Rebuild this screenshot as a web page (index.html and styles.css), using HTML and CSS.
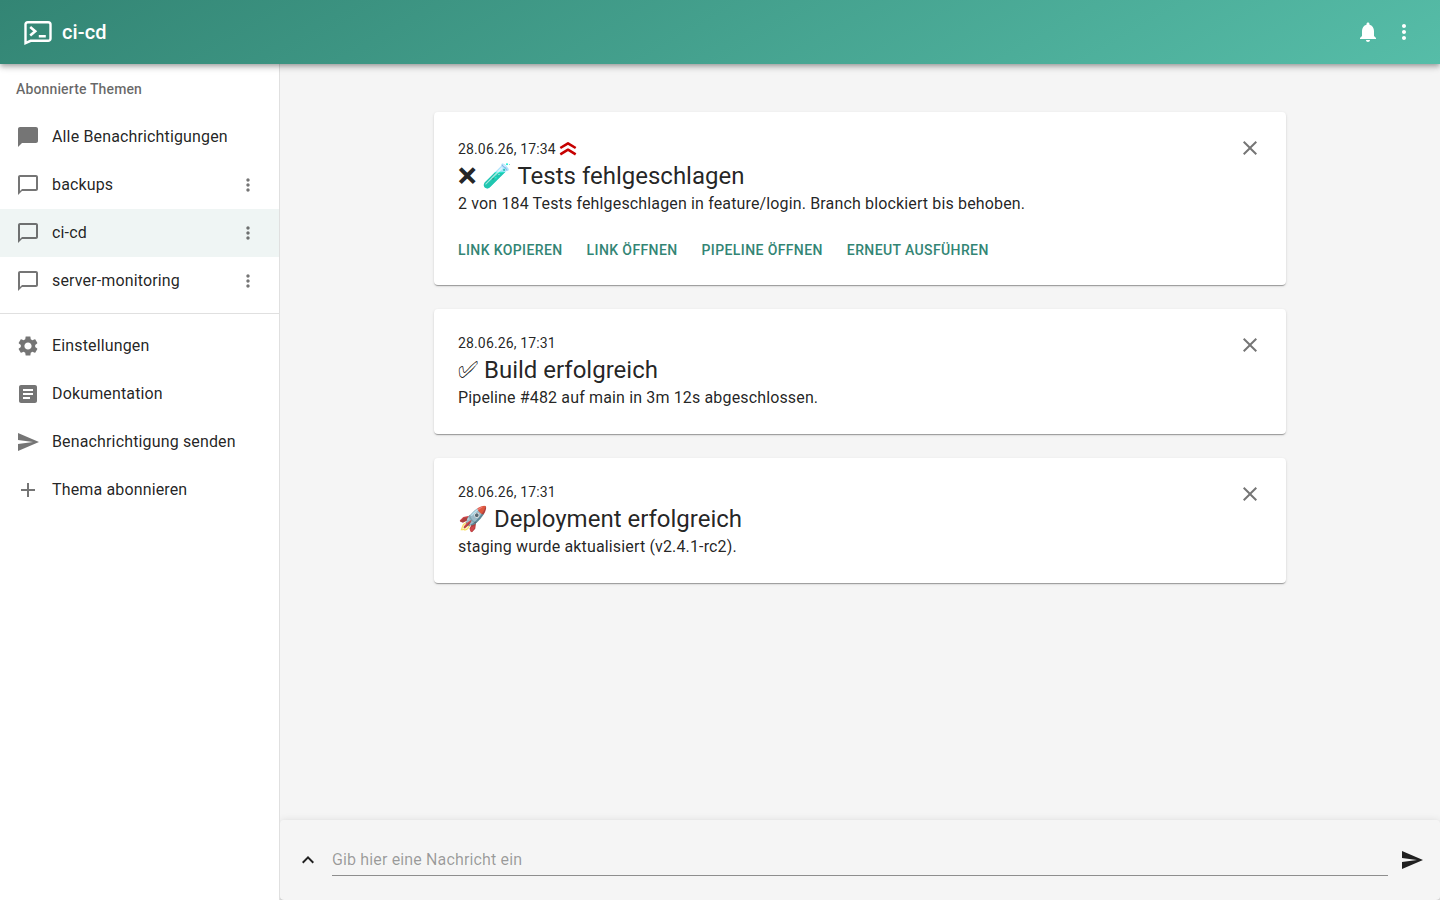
FILE: index.html
```html
<!DOCTYPE html>
<html lang="de">
<head>
    <meta charset="UTF-8">
    <meta name="viewport" content="width=device-width, initial-scale=1.0">
    <title>ci-cd</title>
    <link rel="stylesheet" href="styles.css">
</head>
<body>
    <header class="app-bar">
        <svg class="logo" viewBox="0 0 28 28" fill="none" stroke="#fff">
            <path d="M1.5 25.2V6.6a2.4 2.4 0 0 1 2.4-2.4h20.2a2.4 2.4 0 0 1 2.4 2.4v13.8a2.4 2.4 0 0 1-2.4 2.4H6.6z" stroke-width="2.4"/>
            <path d="M6.2 9l5 4.2-5 4.2M14.8 18.2h7" stroke-width="2.6"/>
        </svg>
        <h1>ci-cd</h1>
        <svg class="icon bell" viewBox="0 0 24 24"><path d="M12 22c1.1 0 2-.9 2-2h-4c0 1.1.89 2 2 2m6-6v-5c0-3.07-1.64-5.64-4.5-6.32V4c0-.83-.67-1.5-1.5-1.5s-1.5.67-1.5 1.5v.68C7.63 5.36 6 7.92 6 11v5l-2 2v1h16v-1z"/></svg>
        <svg class="icon" viewBox="0 0 24 24"><path d="M12 8c1.1 0 2-.9 2-2s-.9-2-2-2-2 .9-2 2 .9 2 2 2m0 2c-1.1 0-2 .9-2 2s.9 2 2 2 2-.9 2-2-.9-2-2-2m0 6c-1.1 0-2 .9-2 2s.9 2 2 2 2-.9 2-2-.9-2-2-2"/></svg>
    </header>

    <div class="layout">
        <nav class="sidebar">
            <div class="subheader">Abonnierte Themen</div>
            <a class="nav-item">
                <svg class="icon" viewBox="0 0 24 24"><path d="M20 2H4c-1.1 0-1.99.9-1.99 2L2 22l4-4h14c1.1 0 2-.9 2-2V4c0-1.1-.9-2-2-2"/></svg>
                <span>Alle Benachrichtigungen</span>
            </a>
            <a class="nav-item">
                <svg class="icon" viewBox="0 0 24 24"><path d="M20 2H4c-1.1 0-2 .9-2 2v18l4-4h14c1.1 0 2-.9 2-2V4c0-1.1-.9-2-2-2m0 14H6l-2 2V4h16z"/></svg>
                <span>backups</span>
                <svg class="icon more" viewBox="0 0 24 24"><path d="M12 8c1.1 0 2-.9 2-2s-.9-2-2-2-2 .9-2 2 .9 2 2 2m0 2c-1.1 0-2 .9-2 2s.9 2 2 2 2-.9 2-2-.9-2-2-2m0 6c-1.1 0-2 .9-2 2s.9 2 2 2 2-.9 2-2-.9-2-2-2"/></svg>
            </a>
            <a class="nav-item selected">
                <svg class="icon" viewBox="0 0 24 24"><path d="M20 2H4c-1.1 0-2 .9-2 2v18l4-4h14c1.1 0 2-.9 2-2V4c0-1.1-.9-2-2-2m0 14H6l-2 2V4h16z"/></svg>
                <span>ci-cd</span>
                <svg class="icon more" viewBox="0 0 24 24"><path d="M12 8c1.1 0 2-.9 2-2s-.9-2-2-2-2 .9-2 2 .9 2 2 2m0 2c-1.1 0-2 .9-2 2s.9 2 2 2 2-.9 2-2-.9-2-2-2m0 6c-1.1 0-2 .9-2 2s.9 2 2 2 2-.9 2-2-.9-2-2-2"/></svg>
            </a>
            <a class="nav-item">
                <svg class="icon" viewBox="0 0 24 24"><path d="M20 2H4c-1.1 0-2 .9-2 2v18l4-4h14c1.1 0 2-.9 2-2V4c0-1.1-.9-2-2-2m0 14H6l-2 2V4h16z"/></svg>
                <span>server-monitoring</span>
                <svg class="icon more" viewBox="0 0 24 24"><path d="M12 8c1.1 0 2-.9 2-2s-.9-2-2-2-2 .9-2 2 .9 2 2 2m0 2c-1.1 0-2 .9-2 2s.9 2 2 2 2-.9 2-2-.9-2-2-2m0 6c-1.1 0-2 .9-2 2s.9 2 2 2 2-.9 2-2-.9-2-2-2"/></svg>
            </a>
            <hr class="divider">
            <a class="nav-item">
                <svg class="icon" viewBox="0 0 24 24"><path d="M19.14 12.94c.04-.3.06-.61.06-.94 0-.32-.02-.64-.07-.94l2.03-1.58c.18-.14.23-.41.12-.61l-1.92-3.32c-.12-.22-.37-.29-.59-.22l-2.39.96c-.5-.38-1.03-.7-1.62-.94l-.36-2.54c-.04-.24-.24-.41-.48-.41h-3.84c-.24 0-.43.17-.47.41l-.36 2.54c-.59.24-1.13.57-1.62.94l-2.39-.96c-.22-.08-.47 0-.59.22L2.74 8.87c-.12.21-.08.47.12.61l2.03 1.58c-.05.3-.09.63-.09.94s.02.64.07.94l-2.03 1.58c-.18.14-.23.41-.12.61l1.92 3.32c.12.22.37.29.59.22l2.39-.96c.5.38 1.03.7 1.62.94l.36 2.54c.05.24.24.41.48.41h3.84c.24 0 .44-.17.47-.41l.36-2.54c.59-.24 1.13-.56 1.62-.94l2.39.96c.22.08.47 0 .59-.22l1.92-3.32c.12-.22.07-.47-.12-.61zM12 15.6c-1.98 0-3.6-1.62-3.6-3.6s1.62-3.6 3.6-3.6 3.6 1.62 3.6 3.6-1.62 3.6-3.6 3.6"/></svg>
                <span>Einstellungen</span>
            </a>
            <a class="nav-item">
                <svg class="icon" viewBox="0 0 24 24"><path d="M19 3H5c-1.1 0-2 .9-2 2v14c0 1.1.9 2 2 2h14c1.1 0 2-.9 2-2V5c0-1.1-.9-2-2-2m-5 14H7v-2h7zm3-4H7v-2h10zm0-4H7V7h10z"/></svg>
                <span>Dokumentation</span>
            </a>
            <a class="nav-item">
                <svg class="icon" viewBox="0 0 24 24"><path d="M2.01 21 23 12 2.01 3 2 10l15 2-15 2z"/></svg>
                <span>Benachrichtigung senden</span>
            </a>
            <a class="nav-item">
                <svg class="icon" viewBox="0 0 24 24"><path d="M19 13h-6v6h-2v-6H5v-2h6V5h2v6h6z"/></svg>
                <span>Thema abonnieren</span>
            </a>
        </nav>

        <main class="main">
            <div class="notifications">
                <article class="card">
                    <svg class="icon close" viewBox="0 0 24 24"><path d="M19 6.41 17.59 5 12 10.59 6.41 5 5 6.41 10.59 12 5 17.59 6.41 19 12 13.41 17.59 19 19 17.59 13.41 12z"/></svg>
                    <div class="date has-priority">
                        <span>28.06.26, 17:34</span>
                        <svg class="priority" viewBox="0 0 20 20" fill="none" stroke="#c60000" stroke-width="2.6" stroke-linejoin="round"><path d="M2.3 9 10 4.4 17.7 9M2.3 15.3 10 10.7l7.7 4.6"/></svg>
                    </div>
                    <h2>&#x274C;&#xFE0E; 🧪 Tests fehlgeschlagen</h2>
                    <p>2 von 184 Tests fehlgeschlagen in feature/login. Branch blockiert bis behoben.</p>
                    <div class="actions">
                        <button>Link kopieren</button>
                        <button>Link öffnen</button>
                        <button>Pipeline öffnen</button>
                        <button>Erneut ausführen</button>
                    </div>
                </article>
                <article class="card">
                    <svg class="icon close" viewBox="0 0 24 24"><path d="M19 6.41 17.59 5 12 10.59 6.41 5 5 6.41 10.59 12 5 17.59 6.41 19 12 13.41 17.59 19 19 17.59 13.41 12z"/></svg>
                    <div class="date">28.06.26, 17:31</div>
                    <h2>&#x2705;&#xFE0E; Build erfolgreich</h2>
                    <p>Pipeline #482 auf main in 3m 12s abgeschlossen.</p>
                </article>
                <article class="card">
                    <svg class="icon close" viewBox="0 0 24 24"><path d="M19 6.41 17.59 5 12 10.59 6.41 5 5 6.41 10.59 12 5 17.59 6.41 19 12 13.41 17.59 19 19 17.59 13.41 12z"/></svg>
                    <div class="date">28.06.26, 17:31</div>
                    <h2>🚀 Deployment erfolgreich</h2>
                    <p>staging wurde aktualisiert (v2.4.1-rc2).</p>
                </article>
            </div>

            <form class="message-bar">
                <svg class="icon" viewBox="0 0 24 24"><path d="m12 8-6 6 1.41 1.41L12 10.83l4.59 4.58L18 14z"/></svg>
                <input type="text" placeholder="Gib hier eine Nachricht ein">
                <svg class="icon" viewBox="0 0 24 24"><path d="M2.01 21 23 12 2.01 3 2 10l15 2-15 2z"/></svg>
            </form>
        </main>
    </div>
</body>
</html>
```

FILE: styles.css
```css
* {
    margin: 0;
    padding: 0;
    box-sizing: border-box;
}

body {
    font-family: Roboto, sans-serif;
    font-size: 16px;
    line-height: 24px;
    letter-spacing: 0.146px;
    color: rgba(0, 0, 0, 0.87);
    background: #f5f5f5;
    height: 100vh;
    display: flex;
    flex-direction: column;
    overflow: hidden;
}

.icon {
    width: 24px;
    height: 24px;
    fill: currentColor;
    flex-shrink: 0;
}

.app-bar {
    height: 64px;
    flex-shrink: 0;
    display: flex;
    align-items: center;
    padding: 0 24px;
    color: #fff;
    background: linear-gradient(150deg, #338574 0%, #56bda8 100%);
    box-shadow: 0 2px 4px -1px rgba(0, 0, 0, 0.2), 0 4px 5px 0 rgba(0, 0, 0, 0.14), 0 1px 10px 0 rgba(0, 0, 0, 0.12);
    position: relative;
    z-index: 2;
}

.logo {
    width: 28px;
    height: 28px;
    margin-right: 10px;
}

.app-bar h1 {
    flex: 1;
    font-size: 20px;
    font-weight: 500;
    line-height: 32px;
}

.bell {
    margin-right: 12px;
}

.layout {
    flex: 1;
    display: flex;
    min-height: 0;
}

.sidebar {
    width: 280px;
    flex-shrink: 0;
    background: #fff;
    border-right: 1px solid rgba(0, 0, 0, 0.12);
    position: relative;
    z-index: 1;
}

.subheader {
    padding: 1px 16px 0;
    font-size: 14px;
    font-weight: 500;
    line-height: 48px;
    letter-spacing: 0.14px;
    color: rgba(0, 0, 0, 0.6);
}

.nav-item {
    display: flex;
    align-items: center;
    height: 48px;
    padding: 0 19px 0 16px;
}

.nav-item .icon {
    color: rgba(0, 0, 0, 0.54);
    margin-right: 12px;
}

.nav-item span {
    flex: 1;
}

.nav-item .more {
    width: 20px;
    height: 20px;
    margin-right: 2px;
}

.nav-item.selected {
    background: rgba(51, 133, 116, 0.08);
}

.divider {
    border: 0;
    border-top: 1px solid rgba(0, 0, 0, 0.12);
    margin: 8px 0;
}

.main {
    flex: 1;
    display: flex;
    flex-direction: column;
    min-width: 0;
}

.notifications {
    flex: 1;
    width: 852px;
    margin: 0 auto;
    padding-top: 48px;
}

.card {
    position: relative;
    margin-bottom: 24px;
    padding: 24px;
    background: #fff;
    border-radius: 4px;
    box-shadow: 0 2px 1px -1px rgba(0, 0, 0, 0.2), 0 1px 1px 0 rgba(0, 0, 0, 0.14), 0 1px 3px 0 rgba(0, 0, 0, 0.12);
}

.close {
    position: absolute;
    top: 24px;
    right: 24px;
    color: rgba(0, 0, 0, 0.54);
}

.date {
    margin-bottom: 1px;
    font-size: 14px;
    line-height: 20px;
}

.has-priority {
    display: flex;
    align-items: center;
    gap: 2px;
    padding-top: 3px;
}

.priority {
    width: 20px;
    height: 20px;
}

.card h2 {
    font-family: Roboto, "DejaVu Sans", sans-serif;
    font-size: 24px;
    font-weight: 400;
    line-height: 32px;
    letter-spacing: 0;
}

.card p {
    line-height: 24px;
}

.actions {
    display: flex;
    gap: 24px;
    margin-top: 23px;
}

.actions button {
    border: 0;
    background: none;
    color: #338574;
    font-family: inherit;
    font-size: 14px;
    font-weight: 500;
    line-height: 22px;
    letter-spacing: 0.39px;
    text-transform: uppercase;
}

.message-bar {
    height: 80px;
    display: flex;
    align-items: center;
    padding: 0 16px;
    border-radius: 4px;
    box-shadow: 0 3px 3px -2px rgba(0, 0, 0, 0.2), 0 3px 4px 0 rgba(0, 0, 0, 0.14), 0 1px 8px 0 rgba(0, 0, 0, 0.12);
}

.message-bar input {
    flex: 1;
    height: 32px;
    margin: 0 12px;
    border: 0;
    border-bottom: 1px solid rgba(0, 0, 0, 0.42);
    background: none;
    font: inherit;
    letter-spacing: inherit;
}

.message-bar input::placeholder {
    color: rgba(0, 0, 0, 0.38);
}
```
